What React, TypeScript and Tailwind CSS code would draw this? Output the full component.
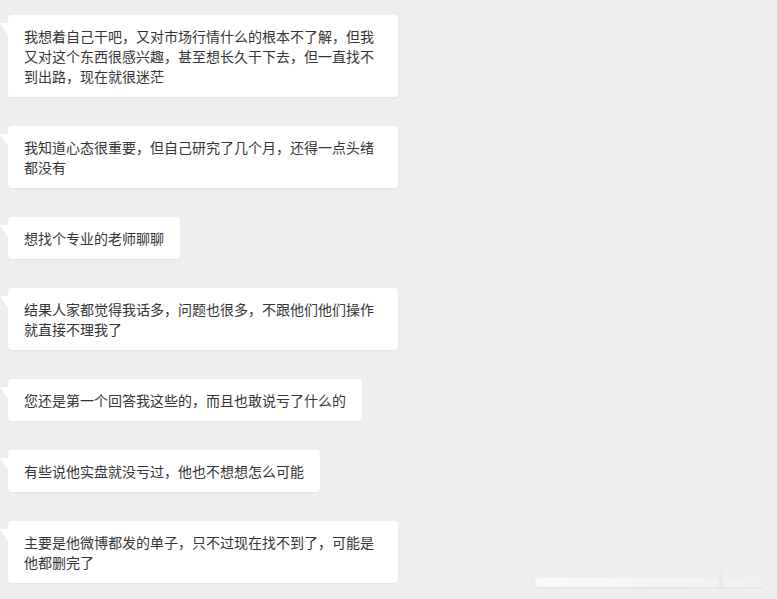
const messages = [
    { text: '我想着自己干吧，又对市场行情什么的根本不了解，但我又对这个东西很感兴趣，甚至想长久干下去，但一直找不到出路，现在就很迷茫' },
    { text: '我知道心态很重要，但自己研究了几个月，还得一点头绪都没有' },
    { text: '想找个专业的老师聊聊' },
    { text: '结果人家都觉得我话多，问题也很多，不跟他们他们操作就直接不理我了' },
    { text: '您还是第一个回答我这些的，而且也敢说亏了什么的' },
    { text: '有些说他实盘就没亏过，他也不想想怎么可能' },
    { text: '主要是他微博都发的单子，只不过现在找不到了，可能是他都删完了' },
];

function Bubble({ text }: { text: string }) {
    return (
        <div className="relative ml-2 self-start max-w-[390px]">
            {/* tail */}
            <div className="absolute -left-2 top-[8px] w-0 h-0 border-r-[8px] border-b-[12px] border-r-white border-b-transparent" />
            <div className="bg-white rounded-[4px] shadow-[0_1px_1px_rgba(0,0,0,0.04)] px-4 py-[11px] text-[14px] leading-[20px] text-[#353535] break-all">
                {text}
            </div>
        </div>
    );
}

export default function App() {
    return (
        <div
            className="relative w-[777px] h-[599px] bg-[#ededed] overflow-hidden"
            style={{ fontFamily: '"Microsoft YaHei", "Noto Sans CJK SC", "Noto Sans", sans-serif' }}
        >
            <div className="flex flex-col gap-[29px] pt-[15px]">
                {messages.map((m, i) => (
                    <Bubble key={i} text={m.text} />
                ))}
            </div>

            {/* faint scrollbar overlay */}
            <div className="absolute left-[535px] top-[578px] w-[230px] h-[9px] rounded-full bg-gradient-to-r from-[#fafafa] via-[#f4f4f4] to-[#efefef] shadow-[0_1px_2px_rgba(0,0,0,0.06)]" />
            <div className="absolute left-[718px] top-[572px] w-[5px] h-[18px] rounded-full bg-[#e6e6e6] opacity-60" />
        </div>
    );
}
